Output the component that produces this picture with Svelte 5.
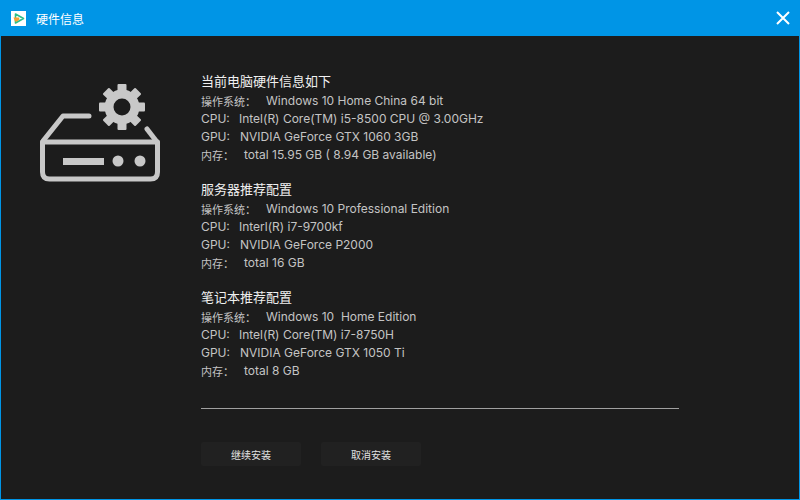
<script lang="ts">
	const sections = [
		{
			title: '当前电脑硬件信息如下',
			os: 'Windows 10 Home China 64 bit',
			cpu: 'Intel(R) Core(TM) i5-8500 CPU @ 3.00GHz',
			gpu: 'NVIDIA GeForce GTX 1060 3GB',
			mem: 'total 15.95 GB ( 8.94 GB available)'
		},
		{
			title: '服务器推荐配置',
			os: 'Windows 10 Professional Edition',
			cpu: 'Interl(R) i7-9700kf',
			gpu: 'NVIDIA GeForce P2000',
			mem: 'total 16 GB'
		},
		{
			title: '笔记本推荐配置',
			os: 'Windows 10  Home Edition',
			cpu: 'Intel(R) Core(TM) i7-8750H',
			gpu: 'NVIDIA GeForce GTX 1050 Ti',
			mem: 'total 8 GB'
		}
	];
</script>

<div class="window">
	<header class="titlebar">
		<div class="logo">
			<svg viewBox="0 0 15 15" width="15" height="15">
				<path d="M4.5 3 L12.5 7.5 L4.5 12 Z" fill="none" stroke="#2bbf8a" stroke-width="1.6" stroke-linejoin="round" />
				<path d="M2.5 6.5 L8 6.5 L8.5 8.5 L6 10.5 L4 10.5 Z" fill="#f5a030" />
			</svg>
		</div>
		<span class="title">硬件信息</span>
		<button class="close" aria-label="关闭">
			<svg viewBox="0 0 14 14" width="14" height="14">
				<path d="M1 1 L13 13 M13 1 L1 13" stroke="#fff" stroke-width="2" />
			</svg>
		</button>
	</header>

	<main class="body">
		<div class="icon-col">
			<svg viewBox="0 0 122 102" width="122" height="102">
				<g fill="none" stroke="#c8c8c8" stroke-width="5" stroke-linecap="round" stroke-linejoin="round">
					<path d="M50 36 H24 L4 61" />
					<path d="M108 49 L118 62" />
					<path d="M3.5 62 H118.5 V92 Q118.5 99 111.5 99 H10.5 Q3.5 99 3.5 92 Z" />
				</g>
				<rect x="24" y="78" width="41" height="7" fill="#c8c8c8" />
				<circle cx="79" cy="81" r="5.5" fill="#c8c8c8" />
				<circle cx="101" cy="81" r="5.5" fill="#c8c8c8" />
				<g transform="translate(83 27)">
					<circle r="13" fill="none" stroke="#c8c8c8" stroke-width="9" />
					{#each [0, 45, 90, 135, 180, 225, 270, 315] as a}
						<rect x="-4.5" y="-23" width="9" height="8" rx="1" fill="#c8c8c8" transform="rotate({a})" />
					{/each}
				</g>
			</svg>
		</div>

		<div class="content">
			{#each sections as s}
				<section class="group">
					<h2>{s.title}</h2>
					<div class="row"><span class="zh os">操作系统：</span>{s.os}</div>
					<div class="row"><span class="cpu">CPU:</span>{s.cpu}</div>
					<div class="row"><span class="gpu">GPU:</span>{s.gpu}</div>
					<div class="row"><span class="zh mem">内存：</span>{s.mem}</div>
				</section>
			{/each}
			<div class="divider"></div>
			<div class="actions">
				<button>继续安装</button>
				<button>取消安装</button>
			</div>
		</div>
	</main>
</div>

<style>
	:global(body) {
		margin: 0;
		background: #1c1c1c;
	}

	.window {
		width: 800px;
		height: 500px;
		box-sizing: border-box;
		display: flex;
		flex-direction: column;
		background: #1c1c1c;
		border: 1px solid #0095e6;
		border-top: none;
		font-family: Inter, "Noto Sans CJK SC", sans-serif;
		overflow: hidden;
	}

	.titlebar {
		height: 36px;
		margin: 0 -1px;
		flex: none;
		display: flex;
		align-items: center;
		background: #0095e6;
		padding: 0 11px;
	}

	.logo {
		width: 15px;
		height: 15px;
		background: #fff;
		display: flex;
	}

	.title {
		margin-left: 10px;
		font-size: 12px;
		color: #fff;
		font-family: "Noto Sans CJK SC", sans-serif;
	}

	.close {
		margin-left: auto;
		margin-right: -1px;
		padding: 0;
		background: none;
		border: none;
		display: flex;
	}

	.body {
		flex: 1;
		display: flex;
		min-height: 0;
	}

	.icon-col {
		width: 200px;
		flex: none;
		padding: 44px 0 0 38px;
		box-sizing: border-box;
	}

	.content {
		width: 478px;
		padding-top: 36px;
	}

	.group {
		margin-bottom: 16px;
	}

	h2 {
		margin: 0;
		height: 20px;
		line-height: 17px;
		font-size: 13px;
		font-weight: 400;
		color: #f0f0f0;
		font-family: "Noto Sans CJK SC", sans-serif;
	}

	.row {
		height: 18px;
		display: flex;
		align-items: center;
		font-size: 12px;
		line-height: 18px;
		color: #c4c4c4;
		white-space: pre;
	}

	.zh {
		font-size: 11px;
		font-family: "Noto Sans CJK SC", sans-serif;
	}

	.os {
		width: 65px;
	}

	.cpu {
		width: 38px;
	}

	.gpu {
		width: 39px;
	}

	.mem {
		width: 43px;
	}

	.divider {
		height: 1px;
		background: #a0a0a0;
		margin-top: 28px;
	}

	.actions {
		display: flex;
		gap: 20px;
		margin-top: 33px;
	}

	.actions button {
		width: 100px;
		height: 24px;
		padding: 0;
		background: #212121;
		border: none;
		border-radius: 2px;
		color: #e0e0e0;
		font-size: 10px;
		font-family: "Noto Sans CJK SC", sans-serif;
	}
</style>
